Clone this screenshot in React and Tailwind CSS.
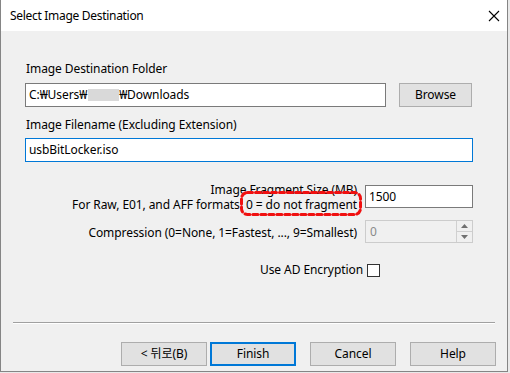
import React from "react";

const font = { fontFamily: '"Noto Sans", "Noto Sans CJK KR", sans-serif' };

function Btn({ children, primary }) {
  return (
    <div
      className={
        "w-[86px] h-[24px] flex items-center justify-center bg-[#e1e1e1] text-[12px] text-black " +
        (primary ? "border-2 border-[#0078d7]" : "border border-[#adadad]")
      }
    >
      {children}
    </div>
  );
}

export default function App() {
  return (
    <div className="w-[510px] h-[373px] bg-[#e9e9e9] text-black tracking-[-0.08px]" style={font}>
      <div className="w-[508px] h-[372px] flex flex-col border-x border-b border-[#858585] bg-[#f0f0f0]">
        {/* title bar */}
        <div className="h-[31px] bg-white flex items-center justify-between pl-[9px] pr-[7px] shrink-0">
          <span className="text-[12px] leading-none tracking-[-0.3px]">Select Image Destination</span>
          <svg width="12" height="12" viewBox="0 0 12 12">
            <path d="M1 1 L11 11 M11 1 L1 11" stroke="#000" strokeWidth="1.1" />
          </svg>
        </div>

        {/* content */}
        <div className="flex flex-col pl-[24px] pr-[34px] pt-[30px] text-[12px]">
          <div className="h-[16px] leading-[16px] pl-[1px]">Image Destination Folder</div>
          <div className="mt-[6px] flex items-center">
            <div className="w-[361px] h-[24px] border border-[#7a7a7a] bg-white flex items-center pl-[3px] whitespace-nowrap">
              <span>C:₩Users₩</span>
              <span className="inline-block w-[31px] h-[12px] bg-[#d9d9d9] ml-[1px]"></span>
              <span>₩Downloads</span>
            </div>
            <div className="ml-[13px] w-[73px] h-[24px] border border-[#adadad] bg-[#e1e1e1] flex items-center justify-center">
              Browse
            </div>
          </div>

          <div className="mt-[10px] h-[16px] leading-[16px] pl-[1px]">Image Filename (Excluding Extension)</div>
          <div className="mt-[5px] w-[448px] h-[24px] border border-[#0078d7] bg-white flex items-center pl-[3px]">
            usbBitLocker.iso
          </div>

          {/* fragment */}
          <div className="mt-[20px] flex justify-end items-start">
            <div className="flex flex-col items-end leading-[15px] text-right">
              <span>Image Fragment Size (MB)</span>
              <span className="whitespace-nowrap">
                For Raw, E01, and AFF formats:{" "}
                <span className="relative">
                  0 = do not fragment
                  <svg
                    className="absolute left-[-6px] top-[-5px] overflow-visible"
                    width="122"
                    height="25"
                    viewBox="0 0 122 25"
                  >
                    <rect
                      x="1.5"
                      y="1.5"
                      width="119"
                      height="22"
                      rx="6"
                      fill="none"
                      stroke="#f01010"
                      strokeWidth="3"
                      strokeDasharray="5 3"
                      strokeLinecap="round"
                    />
                  </svg>
                </span>
              </span>
            </div>
            <div className="ml-[8px] mt-[3px] w-[108px] h-[23px] border border-[#7a7a7a] bg-white flex items-center pl-[3px] shrink-0">
              1500
            </div>
          </div>

          {/* compression */}
          <div className="mt-[8px] flex justify-end items-center">
            <span className="pt-[2px]">Compression (0=None, 1=Fastest, ..., 9=Smallest)</span>
            <div className="ml-[8px] w-[108px] h-[23px] border border-[#cccccc] bg-[#f0f0f0] flex shrink-0">
              <div className="flex-1 flex items-center pl-[4px] text-[#8a8a8a]">0</div>
              <div className="w-[16px] flex flex-col border-l border-[#d0d0d0]">
                <div className="flex-1 flex items-center justify-center border-b border-[#d0d0d0]">
                  <svg width="7" height="4" viewBox="0 0 7 4">
                    <path d="M0 4 L3.5 0 L7 4 Z" fill="#707070" />
                  </svg>
                </div>
                <div className="flex-1 flex items-center justify-center">
                  <svg width="7" height="4" viewBox="0 0 7 4">
                    <path d="M0 0 L3.5 4 L7 0 Z" fill="#707070" />
                  </svg>
                </div>
              </div>
            </div>
          </div>

          {/* AD encryption */}
          <div className="mt-[18px] flex justify-end items-center pr-[93px]">
            <span>Use AD Encryption</span>
            <div className="ml-[4px] w-[13px] h-[13px] border border-[#333333] bg-white"></div>
          </div>
        </div>

        {/* separator */}
        <div className="mt-[43px] mx-[12px] h-[2px] border-t border-[#a0a0a0] border-b border-b-white"></div>

        {/* buttons */}
        <div className="mt-[18px] flex justify-end pr-[11px]">
          <Btn>{"< 뒤로(B)"}</Btn>
          <div className="ml-[3px]">
            <Btn primary>Finish</Btn>
          </div>
          <div className="ml-[14px]">
            <Btn>Cancel</Btn>
          </div>
          <div className="ml-[14px]">
            <Btn>Help</Btn>
          </div>
        </div>
      </div>
    </div>
  );
}
